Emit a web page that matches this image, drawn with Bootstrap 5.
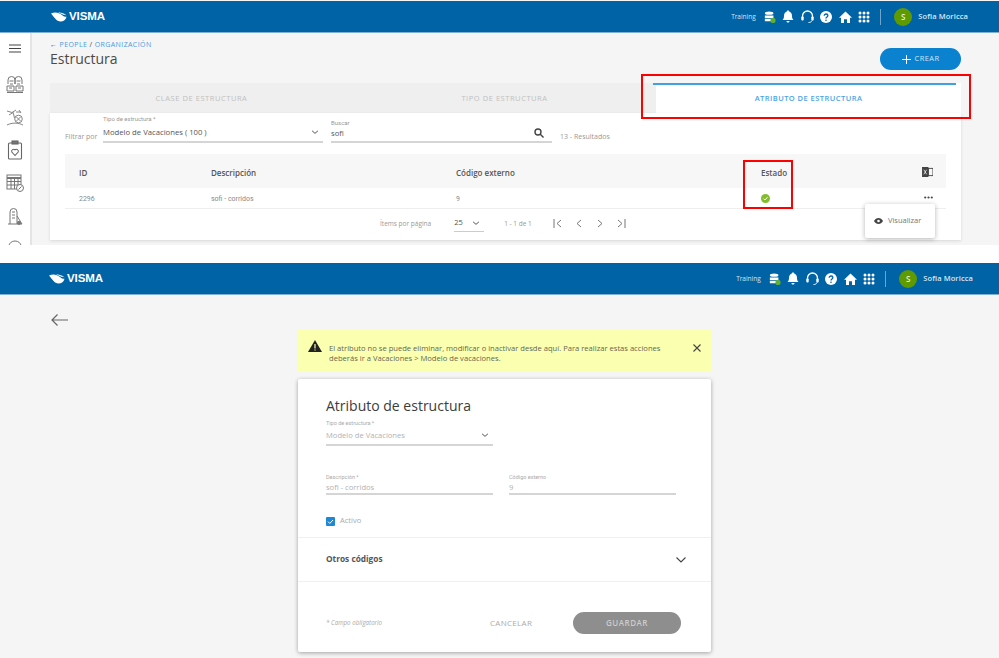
<!doctype html>
<html lang="es">
<head>
<meta charset="utf-8">
<title>Estructura</title>
<link href="https://cdn.jsdelivr.net/npm/bootstrap@5.3.0/dist/css/bootstrap.min.css" rel="stylesheet">
<style>
html,body{height:658px;overflow:hidden;background:#fff;font-family:"Open Sans","Noto Sans",sans-serif;color:#555}
.shot{background:#f5f5f5;position:relative;overflow:hidden}
.shot-a{height:245px}
.shot-b{height:395px;margin-top:18px}
.navbar.topbar{background:#0063a6;height:32px;padding:0 31px 0 51px;border-bottom:1px solid #7fb0d3;flex-wrap:nowrap}
.shot-a .navbar.topbar{border-top:1px solid #f5f5f5;height:33px}
.shot-b .navbar.topbar{padding-left:49px;padding-right:26px}
.logo-wrap{gap:2px}
.logo-txt{color:#fff;font-family:"Liberation Sans",sans-serif;font-weight:700;font-size:11.5px;letter-spacing:-.1px;line-height:1}
.env{color:#d5e5f1;font-size:6.5px;margin-right:8px}
.top-ic{gap:6.5px}
.vsep{width:1px;height:16px;background:#6ea5cb;margin:0 13px 0 10px}
.avatar{width:18px;height:18px;border-radius:50%;background:#5f9a00;color:#e8f2d6;font-size:8px;font-weight:600;margin-right:6px}
.uname{color:#d9e8f3;font-size:7.5px;font-weight:600;letter-spacing:.1px}
.sidebar{width:32px;height:212px;background:#fff;border-right:2px solid #e4e4e4;padding-top:11px;gap:13px;overflow:hidden;flex:none}
.burger{margin-bottom:8px;flex:none}
.sidebar svg{flex:none}
.workarea{padding:7px 38px 0 18px;flex:1;min-width:0}
.crumbs{font-size:7px;letter-spacing:.4px;color:#4a9be0;line-height:10px}
.crumbs span{color:#444}
.pgtitle{font-size:14px;font-weight:400;color:#4a4a4a;margin:0;line-height:18px}
.btn-new{width:81px;height:22px;border-radius:11px;background:#0a82d0;color:#cfe6f7;font-size:7.5px;letter-spacing:.4px;padding:0;margin-top:8px;border:0}
.tabband{height:30px;margin-top:13px}
.tabcell{width:303px;background:#efefef;color:#c0c0c0;font-size:7.5px;letter-spacing:.55px;padding-top:1px}
.tabcell.on{width:305px;background:#fff;color:#4aa3e6;font-weight:600;position:relative;letter-spacing:.45px}
.tabcell.on::before{content:"";position:absolute;left:-3px;right:5px;top:0;height:2px;background:#3fa0e6}
.panel{background:#fff;height:127px;box-shadow:0 1px 3px rgba(0,0,0,.12);border:0;border-radius:0}
.filters{height:41px;padding:0 0 0 15px}
.tiny{font-size:6px;color:#999;line-height:8px;font-family:Roboto,sans-serif}
.mini{font-size:7px;color:#999}
.fieldv{font-size:7.700px;color:#555;line-height:12px;font-family:"Open Sans",sans-serif}
.uline{border-bottom:2px solid #d5d5d5}
.ftag{width:38px;margin-top:19px}
.fsel{width:220px;margin-top:2px;height:28px}
.fsel .valrow{margin-top:3px}
.fsearch{width:221px;margin-left:8px;margin-top:6px;height:24px}
.res{margin-left:8px;margin-top:19px}
.grid-tbl{width:881px;margin:0 15px;table-layout:fixed}
.grid-tbl th{background:#f7f7f7;height:34px;font-size:8px;font-weight:600;color:#555;padding:4px 0 0 14px;border:0;vertical-align:middle}
.grid-tbl td{height:21px;font-size:7px;color:#8a8a8a;padding:2px 0 0 14px;border-bottom:1px solid #eee;vertical-align:middle;font-family:Roboto,sans-serif}
.grid-tbl .tools{text-align:right;padding-right:13px;padding-top:0}
.c1{width:132px}.c2{width:245px}.c3{width:305px}.c4{width:150px}
.pager{height:31px;padding:0 0 2px 330px;font-size:6.5px;color:#999}
.psel{width:30px;height:17px;margin:0 20px 0 23px;border-bottom:1px solid #ccc;color:#555;font-size:7.5px}
.pg-ic{gap:11px;margin-left:21px}
.pop{position:absolute;left:865px;top:204px;width:70px;height:34px;background:#fff;box-shadow:0 1px 5px rgba(0,0,0,.3);border-radius:2px;gap:5px;padding-left:9px;font-size:7.5px;color:#777}
.redbox{position:absolute;border:2px solid #f00}
.rb1{left:641px;top:74px;width:330px;height:45px}
.rb2{left:743px;top:160px;width:50px;height:49px}
.backrow{height:34px;padding:19px 0 0 51px}
.cwrap{width:413px;margin-left:298px}
.warn{background:#fbffb0;height:42px;margin:0;padding:0 10px;border:0;border-radius:0;font-size:7.6px;line-height:10.500px;color:#666650;gap:7px}
.warn-ic{margin-top:-9px;flex:none}
.warn-txt{margin-top:6px}
.warn-x{margin-top:-5px;flex:none}
.formcard{background:#fff;height:273px;margin-top:8px;box-shadow:0 1px 4px rgba(0,0,0,.35);border:0;border-radius:2px;overflow:hidden}
.formtitle{font-size:14px;font-weight:400;color:#3c3c3c;margin:18px 0 0 28px;line-height:17px}
.fblock{width:167px}
.f1{margin:5px 0 0 28px;height:27px}
.f1 .valrow{margin-top:2px}
.flab{font-size:5.500px;color:#aaa;line-height:8px;font-family:Roboto,sans-serif}
.fval{font-size:7.600px;color:#b2b2b2;line-height:13px;font-family:"Open Sans",sans-serif}
.f2row{margin:27px 0 0 28px;gap:16px}
.f2row .fblock{height:22px}
.chkrow{margin:20px 0 0 28px;gap:5px;font-size:7.500px;color:#aaa;height:12px;font-family:"Open Sans",sans-serif}
.chk{width:9px;height:9px;background:#1e88d8;border-radius:1px}
.other{height:45px;margin-top:10px;padding:0 25px 0 28px;border-top:1px solid #f0f0f0;border-bottom:1px solid #f0f0f0;font-size:8.300px;font-weight:700;color:#555}
.ffoot{padding:30px 30px 0 28px}
.oblig{font-size:6.200px;font-style:italic;color:#aaa;width:164px}
.btn-cancel{font-size:8px;letter-spacing:.3px;color:#aaa;width:83px;padding:0;border:0;text-align:left}
.btn-save{width:108px;height:22px;border-radius:11px;background:#8e8e8e;color:#ccc;font-size:8px;font-weight:600;letter-spacing:.5px;padding:0;border:0}
</style>
</head>
<body>
<svg width="0" height="0" class="d-block" aria-hidden="true">
<defs>
<g id="i-logo"><path d="M0 1.500C4-.5 8 .5 11 3c2 1.700 3.500 2 4.500 1.800C15 7.800 12.500 9.500 9.500 9.500 5.500 9.500 3 5 0 1.500Z" fill="#fff"/><path d="M7 .3C9.500 .3 12.500 1 15.500 3.200 13 3.300 11.500 2.200 7 .3Z" fill="#fff"/></g>
<g id="i-db"><ellipse cx="6" cy="2.500" rx="5" ry="2" fill="#fff"/><path d="M1 5.200h10v3H1zM1 9h10v3H1z" fill="#fff"/><circle cx="10.500" cy="11" r="3" fill="#5fb030"/></g>
<g id="i-bell"><path d="M6 .5c.8 0 1.200.5 1.200 1.100C9.200 2.200 10 4 10 6c0 2 .6 3 1.500 4h-11C1.400 9 2 8 2 6c0-2 .8-3.800 2.800-4.400C4.800 1 5.200 .5 6 .5zM4.500 11h3c0 1-.7 1.500-1.500 1.500S4.500 12 4.500 11z" fill="#fff"/></g>
<g id="i-head"><path d="M1.500 8V6a5 5 0 0 1 10 0v2" fill="none" stroke="#fff" stroke-width="1.300"/><rect x=".3" y="6.500" width="2.400" height="4" rx="1" fill="#fff"/><rect x="10.300" y="6.500" width="2.400" height="4" rx="1" fill="#fff"/><path d="M11 10.500c-.5 1.500-2 2-3.500 2" fill="none" stroke="#fff"/></g>
<g id="i-help"><circle cx="6" cy="6" r="6" fill="#fff"/><path d="M4.200 4.700c0-1.100.9-1.700 1.900-1.700s1.800.6 1.800 1.600c0 1.500-1.900 1.400-1.900 3" fill="none" stroke="#0063a6" stroke-width="1.300"/><circle cx="6" cy="9.300" r=".8" fill="#0063a6"/></g>
<g id="i-home"><path d="M6.500 .5 13 6.800h-2V12H8V8.200H5V12H2V6.800H0z" fill="#fff"/></g>
<g id="i-apps" fill="#fff"><circle cx="2" cy="2" r="1.500"/><circle cx="6" cy="2" r="1.500"/><circle cx="10" cy="2" r="1.500"/><circle cx="2" cy="6" r="1.500"/><circle cx="6" cy="6" r="1.500"/><circle cx="10" cy="6" r="1.500"/><circle cx="2" cy="10" r="1.500"/><circle cx="6" cy="10" r="1.500"/><circle cx="10" cy="10" r="1.500"/></g>
<g id="i-chev"><path d="M1 1l3.500 3L8 1" fill="none" stroke="#555" stroke-width="1.200"/></g>
</defs>
</svg>

<section class="shot shot-a">
  <nav class="navbar topbar d-flex align-items-center justify-content-between">
    <div class="logo-wrap d-flex align-items-center"><svg width="16" height="10" viewBox="0 0 16 10"><use href="#i-logo"/></svg><span class="logo-txt">VISMA</span></div>
    <div class="d-flex align-items-center">
      <span class="env">Training</span>
      <div class="d-flex align-items-center top-ic">
        <svg width="12" height="14" viewBox="0 0 14 14"><use href="#i-db"/></svg>
        <svg width="12" height="13" viewBox="0 0 12 13"><use href="#i-bell"/></svg>
        <svg width="13" height="13" viewBox="0 0 13 13"><use href="#i-head"/></svg>
        <svg width="12" height="12" viewBox="0 0 12 12"><use href="#i-help"/></svg>
        <svg width="13" height="12" viewBox="0 0 13 12"><use href="#i-home"/></svg>
        <svg width="12" height="12" viewBox="0 0 12 12"><use href="#i-apps"/></svg>
      </div>
      <span class="vsep"></span>
      <span class="avatar d-flex align-items-center justify-content-center">S</span>
      <span class="uname">Sofia Moricca</span>
    </div>
  </nav>
  <div class="d-flex">
    <aside class="sidebar d-flex flex-column align-items-center">
      <svg class="burger" width="12" height="9" viewBox="0 0 12 9"><path d="M0 1h12M0 4.500h12M0 8h12" stroke="#444" stroke-width="1.100"/></svg>
      <svg width="18" height="20" viewBox="0 0 18 20" fill="none" stroke="#777" stroke-width="1"><path d="M2 10V6a3.500 3.500 0 0 1 7 0v4M9 10V6a3.500 3.500 0 0 1 7 0v4"/><path d="M3.500 7h4M10.500 7h4M4 10h3M11 10h3"/><path d="M1 12h7v5H1zM10 12h7v5h-7zM1 18.500h16"/><path d="M3 14h3M12 14h3"/></svg>
      <svg width="18" height="20" viewBox="0 0 18 20" fill="none" stroke="#888" stroke-width="1"><path d="M1 4l5 1.500L10 3M3 8l4-2.500M7 5l1.500 6M10 5h5M13 3l2 3"/><path d="M1 18c5-2.500 11-2.500 16 0"/><circle cx="12.500" cy="12" r="3.800"/><path d="M10 9.500l5 5M15 9.500l-5 5"/></svg>
      <svg width="16" height="20" viewBox="0 0 16 20" fill="none" stroke="#666" stroke-width="1.100"><rect x="1.500" y="3" width="13" height="16" rx="1"/><rect x="5" y="1" width="6" height="3" fill="#777"/><path d="M8 15.500 4.800 12a2 2 0 0 1 3.200-2.200A2 2 0 0 1 11.200 12z"/></svg>
      <svg width="18" height="20" viewBox="0 0 18 20" fill="none" stroke="#777" stroke-width="1"><rect x="1" y="2" width="14" height="14"/><path d="M1 5h14" stroke-width="2"/><path d="M1 8.500h14M1 12h14M5 5v11M8.500 5v11M12 5v11"/><circle cx="14" cy="15" r="3.500" fill="#fff"/><path d="M12.500 16.500l3-3"/></svg>
      <svg width="18" height="20" viewBox="0 0 18 20" fill="none" stroke="#777" stroke-width="1"><path d="M4 18V6a3.500 3.500 0 0 1 7 0v12M2 18h10M6 6h3M6 9h3M6 12h3"/><path d="M11 10l5 8h-3l-1-3"/><circle cx="13" cy="17" r="1.500" fill="#777"/></svg>
      <svg width="18" height="20" viewBox="0 0 18 20" fill="none" stroke="#777" stroke-width="1"><path d="M3 18V7a6 5 0 0 1 12 0v11zM7 9h4"/></svg>
    </aside>
    <main class="workarea">
      <div class="d-flex justify-content-between">
        <div>
          <div class="crumbs"><span>&#8592;</span> PEOPLE <span>/</span> ORGANIZACIÓN</div>
          <h1 class="pgtitle">Estructura</h1>
        </div>
        <button type="button" class="btn btn-new d-flex align-items-center justify-content-center gap-1"><svg width="9" height="9" viewBox="0 0 9 9"><path d="M4.500 0v9M0 4.500h9" stroke="#fff" stroke-width="1"/></svg>CREAR</button>
      </div>
      <div class="tabband d-flex">
        <div class="tabcell d-flex align-items-center justify-content-center">CLASE DE ESTRUCTURA</div>
        <div class="tabcell d-flex align-items-center justify-content-center">TIPO DE ESTRUCTURA</div>
        <div class="tabcell on d-flex align-items-center justify-content-center">ATRIBUTO DE ESTRUCTURA</div>
      </div>
      <div class="card panel">
        <div class="filters d-flex">
          <span class="mini ftag">Filtrar por</span>
          <div class="fsel uline d-flex flex-column">
            <span class="tiny">Tipo de estructura *</span>
            <div class="valrow d-flex align-items-center justify-content-between pe-1"><span class="fieldv">Modelo de Vacaciones ( 100 )</span><svg width="8" height="5" viewBox="0 0 9 6"><use href="#i-chev"/></svg></div>
          </div>
          <div class="fsearch uline d-flex flex-column">
            <span class="tiny">Buscar</span>
            <div class="d-flex align-items-center justify-content-between pe-2"><span class="fieldv">sofi</span><svg width="10" height="10" viewBox="0 0 10 10" fill="none" stroke="#444" stroke-width="1.400"><circle cx="4" cy="4" r="3"/><path d="M6.300 6.300 9.500 9.500"/></svg></div>
          </div>
          <span class="mini res">13 - Resultados</span>
        </div>
        <table class="grid-tbl">
          <colgroup><col class="c1"><col class="c2"><col class="c3"><col class="c4"><col></colgroup>
          <thead><tr><th>ID</th><th>Descripción</th><th>Código externo</th><th>Estado</th>
            <th class="tools"><svg width="11" height="10" viewBox="0 0 12 11"><rect x="0" y="0" width="7" height="11" fill="#444"/><rect x="7" y="1.500" width="5" height="8" fill="none" stroke="#444"/><path d="M2 3l3 5M5 3L2 8" stroke="#fff" stroke-width=".8"/></svg></th></tr></thead>
          <tbody><tr><td>2296</td><td>sofi - corridos</td><td>9</td>
            <td><svg width="9" height="9" viewBox="0 0 9 9" class="d-block"><circle cx="4.500" cy="4.500" r="4.500" fill="#83bd2e"/><path d="M2.500 4.600l1.400 1.400 2.600-2.800" fill="none" stroke="#fff"/></svg></td>
            <td class="tools"><svg width="9" height="3" viewBox="0 0 9 3" class="d-inline-block"><circle cx="1.200" cy="1.500" r="1.100" fill="#444"/><circle cx="4.500" cy="1.500" r="1.100" fill="#444"/><circle cx="7.800" cy="1.500" r="1.100" fill="#444"/></svg></td></tr></tbody>
        </table>
        <div class="pager d-flex align-items-center">
          <span>Ítems por página</span>
          <div class="psel d-flex align-items-center justify-content-between pe-1"><span>25</span><svg width="8" height="5" viewBox="0 0 9 6"><use href="#i-chev"/></svg></div>
          <span>1 - 1 de 1</span>
          <div class="pg-ic d-flex align-items-center">
            <svg width="10" height="9" viewBox="0 0 10 9" fill="none" stroke="#777"><path d="M1 0v9M8 1 4 4.500 8 8"/></svg>
            <svg width="10" height="9" viewBox="0 0 10 9" fill="none" stroke="#777"><path d="M7 1 3 4.500 7 8"/></svg>
            <svg width="10" height="9" viewBox="0 0 10 9" fill="none" stroke="#777"><path d="M3 1l4 3.500L3 8"/></svg>
            <svg width="10" height="9" viewBox="0 0 10 9" fill="none" stroke="#777"><path d="M2 1l4 3.500L2 8M9 0v9"/></svg>
          </div>
        </div>
      </div>
    </main>
  </div>
  <div class="pop d-flex align-items-center"><svg width="9" height="6" viewBox="0 0 9 6"><path d="M0 3c2-4 7-4 9 0-2 4-7 4-9 0z" fill="#444"/><circle cx="4.500" cy="3" r="1.300" fill="#fff"/></svg>Visualizar</div>
  <div class="redbox rb1"></div>
  <div class="redbox rb2"></div>
</section>

<section class="shot shot-b">
  <nav class="navbar topbar d-flex align-items-center justify-content-between">
    <div class="logo-wrap d-flex align-items-center"><svg width="16" height="10" viewBox="0 0 16 10"><use href="#i-logo"/></svg><span class="logo-txt">VISMA</span></div>
    <div class="d-flex align-items-center">
      <span class="env">Training</span>
      <div class="d-flex align-items-center top-ic">
        <svg width="12" height="14" viewBox="0 0 14 14"><use href="#i-db"/></svg>
        <svg width="12" height="13" viewBox="0 0 12 13"><use href="#i-bell"/></svg>
        <svg width="13" height="13" viewBox="0 0 13 13"><use href="#i-head"/></svg>
        <svg width="12" height="12" viewBox="0 0 12 12"><use href="#i-help"/></svg>
        <svg width="13" height="12" viewBox="0 0 13 12"><use href="#i-home"/></svg>
        <svg width="12" height="12" viewBox="0 0 12 12"><use href="#i-apps"/></svg>
      </div>
      <span class="vsep"></span>
      <span class="avatar d-flex align-items-center justify-content-center">S</span>
      <span class="uname">Sofia Moricca</span>
    </div>
  </nav>
  <div class="backrow d-flex align-items-start"><svg width="17" height="12" viewBox="0 0 17 12" fill="none" stroke="#666" stroke-width="1.200"><path d="M17 6H1M6.500.5 1 6l5.500 5.500"/></svg></div>
  <div class="cwrap">
    <div class="alert warn d-flex align-items-center" role="alert">
      <svg class="warn-ic" width="14" height="12" viewBox="0 0 14 12"><path d="M7 0 14 12H0z" fill="#222"/><path d="M7 4v4.500M7 9.500v1" stroke="#fbffb0" stroke-width="1.200"/></svg>
      <div class="warn-txt flex-grow-1">El atributo no se puede eliminar, modificar o inactivar desde aquí. Para realizar estas acciones<br>deberás ir a Vacaciones &gt; Modelo de vacaciones.</div>
      <svg class="warn-x" width="8" height="8" viewBox="0 0 8 8"><path d="M.5 .5l7 7M7.500 .5l-7 7" stroke="#444" stroke-width="1.100"/></svg>
    </div>
    <div class="card formcard">
      <h2 class="formtitle">Atributo de estructura</h2>
      <div class="fblock f1 uline">
        <div class="flab">Tipo de estructura *</div>
        <div class="valrow d-flex align-items-center justify-content-between pe-1"><span class="fval">Modelo de Vacaciones</span><svg width="8" height="5" viewBox="0 0 9 6"><use href="#i-chev"/></svg></div>
      </div>
      <div class="f2row d-flex">
        <div class="fblock uline"><div class="flab">Descripción *</div><div class="fval">sofi - corridos</div></div>
        <div class="fblock uline"><div class="flab">Código externo</div><div class="fval">9</div></div>
      </div>
      <div class="chkrow d-flex align-items-center">
        <svg width="9" height="9" viewBox="0 0 9 9" class="chk"><path d="M2 4.600l1.800 1.800L7 3" fill="none" stroke="#fff" stroke-width="1"/></svg>
        <span>Activo</span>
      </div>
      <div class="other d-flex align-items-center justify-content-between">
        <span>Otros códigos</span>
        <svg width="10" height="6" viewBox="0 0 10 6"><path d="M.5 .5 5 5 9.500 .5" fill="none" stroke="#444" stroke-width="1.100"/></svg>
      </div>
      <div class="ffoot d-flex align-items-center">
        <span class="oblig">* Campo obligatorio</span>
        <button type="button" class="btn btn-cancel">CANCELAR</button>
        <button type="button" class="btn btn-save">GUARDAR</button>
      </div>
    </div>
  </div>
</section>
<script src="https://cdn.jsdelivr.net/npm/bootstrap@5.3.0/dist/js/bootstrap.bundle.min.js"></script>
</body>
</html>
